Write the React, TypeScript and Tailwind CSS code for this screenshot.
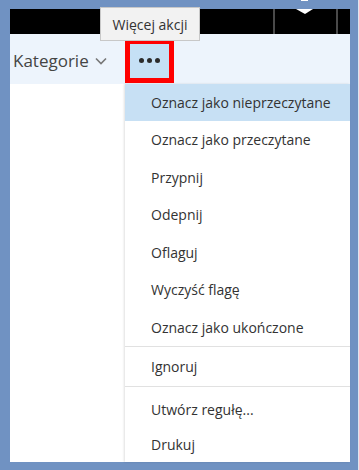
import React from "react";

const font = { fontFamily: '"Open Sans", "Noto Sans", sans-serif' };

function Item({ label, active, h }: { label: string; active?: boolean; h: string }) {
  return (
    <div
      className={`${h} flex items-center pl-[26px] text-[14px] text-[#333333] ${active ? "bg-[#c7e0f4]" : ""}`}
    >
      {label}
    </div>
  );
}

export default function App() {
  return (
    <div
      className="relative w-[359px] h-[470px] bg-[#7092c2] pt-[9px] pl-[10px] pr-[9px] pb-[8px]"
      style={font}
    >
      <div className="flex h-full w-full flex-col bg-white">
        {/* black top bar */}
        <div className="relative flex h-[25px] bg-black">
          <div className="ml-[263px] h-full w-[2px] bg-[#4a4a4a]" />
          <div className="ml-[61px] h-full w-[2px] bg-[#4a4a4a]" />
        </div>
        {/* toolbar */}
        <div className="flex h-[50px] items-start bg-[#edf4fc]">
          <div className="ml-[3px] mt-[14px] flex items-center text-[17px] text-[#444444]">
            <span>Kategorie</span>
            <svg width="12" height="8" viewBox="0 0 12 8" className="ml-[6px] mt-[1px]">
              <path d="M1 1.5 L6 6.5 L11 1.5" fill="none" stroke="#777777" strokeWidth="1.6" />
            </svg>
          </div>
          <div className="ml-[18px] mt-[5px] flex h-[44px] w-[49px] items-center justify-center gap-[3px] border-[5px] border-[#ff0000] bg-[#c5e0f5]">
            <span className="h-[5px] w-[5px] rounded-full bg-[#2b2b2b]" />
            <span className="h-[5px] w-[5px] rounded-full bg-[#2b2b2b]" />
            <span className="h-[5px] w-[5px] rounded-full bg-[#2b2b2b]" />
          </div>
        </div>
        {/* content */}
        <div className="flex flex-1">
          <div className="w-[115px]" />
          <div className="flex flex-1 flex-col bg-white shadow-[-1px_0_2px_rgba(0,0,0,0.12)]">
            <Item label="Oznacz jako nieprzeczytane" active h="h-[37.5px]" />
            <Item label="Oznacz jako przeczytane" h="h-[37.5px]" />
            <Item label="Przypnij" h="h-[37.5px]" />
            <Item label="Odepnij" h="h-[37.5px]" />
            <Item label="Oflaguj" h="h-[37.5px]" />
            <Item label="Wyczyść flagę" h="h-[37.5px]" />
            <Item label="Oznacz jako ukończone" h="h-[37.5px]" />
            <div className="border-t border-[#e1e1e1]">
              <Item label="Ignoruj" h="h-[39px]" />
            </div>
            <div className="border-t border-[#e1e1e1] pt-[5px]">
              <Item label="Utwórz regułę..." h="h-[35px]" />
              <Item label="Drukuj" h="h-[35px]" />
            </div>
          </div>
        </div>
      </div>
      {/* white icon tip poking under the top border */}
      <svg width="20" height="16" viewBox="0 0 20 16" className="absolute left-[295px] top-0">
        <rect x="6" y="0" width="7" height="1" fill="#ffffff" />
        <path d="M1 9 H18 L10 14 Z" fill="#ffffff" />
      </svg>
      {/* right edge light line */}
      <div className="absolute right-0 top-0 h-full w-[1px] bg-[#dfe6f0]" />
      {/* tooltip */}
      <div className="absolute left-[100px] top-[7px] flex h-[34px] w-[100px] items-center justify-center border border-[#c8c8c8] bg-[#f2f2f2] text-[14px] text-[#333333]">
        Więcej akcji
      </div>
    </div>
  );
}
